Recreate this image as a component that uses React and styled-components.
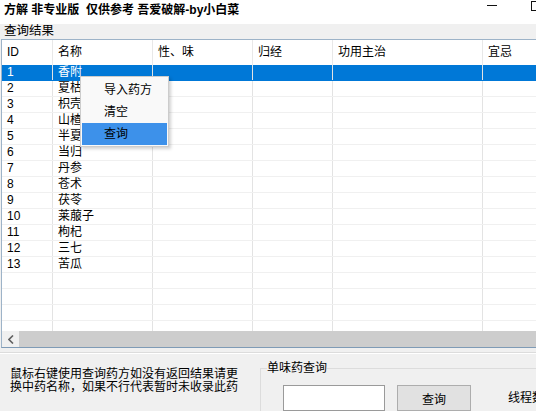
import React from "react";
import styled, { createGlobalStyle } from "styled-components";

const FONT = `"Liberation Sans", "Noto Sans CJK SC", sans-serif`;

const Global = createGlobalStyle`
  html, body { margin: 0; padding: 0; background: #f0f0f0; }
  body { font-family: ${FONT}; }
`;

const Window = styled.div`
  position: relative;
  width: 536px;
  height: 411px;
  overflow: hidden;
  background: #f0f0f0;
  display: flex;
  flex-direction: column;
  font-family: ${FONT};
  font-size: 12px;
  color: #000;
`;

const TitleBar = styled.div`
  height: 24px;
  flex: none;
  background: #fff;
  display: flex;
  align-items: flex-start;
`;

const TitleText = styled.div`
  padding: 3px 0 0 4px;
  font-weight: bold;
  font-size: 12px;
  line-height: 15px;
  white-space: pre;
`;

const Captions = styled.div`
  margin-left: auto;
  width: 49px;
  flex: none;
  display: flex;
  gap: 34px;
`;

const MinGlyph = styled.span`
  flex: none;
  width: 10px;
  height: 1px;
  margin-top: 5px;
  background: #111;
`;

const MaxGlyph = styled.span`
  flex: none;
  width: 10px;
  height: 10px;
  margin-top: 1px;
  border: 1px solid #111;
  box-sizing: border-box;
`;

const GroupLabel = styled.div`
  height: 15px;
  flex: none;
  padding-left: 4px;
  font-size: 12.5px;
  line-height: 15px;
`;

const ListBox = styled.div`
  height: 309px;
  width: 540px;
  margin-left: 1px;
  flex: none;
  box-sizing: border-box;
  border: 1px solid #9db3c8;
  border-bottom-color: #7f9bb6;
  background: #fff;
  display: flex;
  flex-direction: column;
`;

const GridArea = styled.div`
  flex: 1;
  overflow: hidden;
  display: flex;
  flex-direction: column;
`;

const COLS = "51px 100px 100px 80px 150px 1fr";

const HeaderRow = styled.div`
  display: grid;
  grid-template-columns: ${COLS};
  height: 25px;
  flex: none;
  line-height: 25px;
`;

const Row = styled.div`
  display: grid;
  grid-template-columns: ${COLS};
  height: 16px;
  flex: none;
  box-sizing: border-box;
  line-height: 15px;
  border-bottom: 1px solid ${(p) => (p.$selected ? "#0078d7" : "#f0f0f0")};
  background: ${(p) => (p.$selected ? "#0078d7" : "#fff")};
  color: ${(p) => (p.$selected ? "#fff" : "#000")};
`;

const Cell = styled.div`
  box-sizing: border-box;
  padding-left: 5px;
  border-right: 1px solid ${(p) => (p.$head ? "#e8e8e8" : "#e3e3e3")};
  white-space: nowrap;
  overflow: hidden;
`;

const HScroll = styled.div`
  height: 16px;
  flex: none;
  display: flex;
  background: #f0f0f0;
`;

const ScrollArrow = styled.div`
  width: 17px;
  flex: none;
  display: flex;
  align-items: center;
  justify-content: center;
`;

const ScrollThumb = styled.div`
  flex: 1;
  background: #cdcdcd;
`;

const BottomPanel = styled.div`
  flex: 1;
  margin-top: 4px;
  border-top: 1px solid #dcdcdc;
  box-shadow: inset 0 1px 0 #fff;
  display: flex;
  align-items: flex-start;
`;

const Hint = styled.div`
  width: 260px;
  flex: none;
  box-sizing: border-box;
  padding: 15px 0 0 10px;
  font-size: 12px;
  line-height: 13px;
`;

const Group = styled.fieldset`
  margin: 8px 0 0 0;
  padding: 0 0 0 6px;
  border: 1px solid #dcdcdc;
  width: 320px;
  min-width: 0;
  flex: none;
  height: 80px;
`;

const Legend = styled.legend`
  padding: 0;
  font-size: 12px;
  line-height: 14px;
`;

const FieldRow = styled.div`
  display: flex;
  align-items: center;
  margin-top: 10px;
  padding-left: 16px;
`;

const TextInput = styled.input`
  width: 102px;
  height: 26px;
  box-sizing: border-box;
  border: 1px solid #9a9a9a;
  background: #fff;
  margin: 0;
  padding: 0 3px;
  font-family: ${FONT};
  font-size: 12px;
  outline: none;
`;

const Button = styled.button`
  margin: 0 0 0 12px;
  width: 74px;
  height: 26px;
  box-sizing: border-box;
  border: 1px solid #adadad;
  background: #e1e1e1;
  font-family: ${FONT};
  font-size: 12px;
  color: #000;
  padding: 0;
`;

const FieldLabel = styled.span`
  margin-left: 37px;
  white-space: nowrap;
  line-height: 26px;
`;

const Menu = styled.div`
  position: absolute;
  left: 80px;
  top: 76px;
  width: 89px;
  box-sizing: border-box;
  padding: 2px 1px 1px;
  border: 1px solid #cccccc;
  background: #f9f9f9;
  box-shadow: 2px 2px 3px rgba(0, 0, 0, 0.18);
`;

const MenuItem = styled.div`
  height: 22px;
  line-height: 22px;
  padding-left: 22px;
  background: ${(p) => (p.$active ? "#3d91ea" : "transparent")};
`;

const COLUMNS = ["ID", "名称", "性、味", "归经", "功用主治", "宜忌"];
const HERBS = [
  "香附", "夏枯草", "枳壳", "山楂", "半夏", "当归", "丹参", "苍术",
  "茯苓", "莱菔子", "枸杞", "三七", "苦瓜",
];

export default function App() {
  const rows = [];
  for (let i = 0; i < 17; i++) {
    const name = HERBS[i];
    rows.push(
      <Row key={i} $selected={i === 0}>
        <Cell>{name ? i + 1 : ""}</Cell>
        <Cell>{name || ""}</Cell>
        <Cell />
        <Cell />
        <Cell />
        <Cell />
      </Row>
    );
  }
  return (
    <Window>
      <Global />
      <TitleBar>
        <TitleText>{"方解 非专业版  仅供参考 吾爱破解-by小白菜"}</TitleText>
        <Captions>
          <MinGlyph />
          <MaxGlyph />
        </Captions>
      </TitleBar>
      <GroupLabel>查询结果</GroupLabel>
      <ListBox>
        <GridArea>
          <HeaderRow>
            {COLUMNS.map((c) => (
              <Cell key={c} $head>
                {c}
              </Cell>
            ))}
          </HeaderRow>
          {rows}
        </GridArea>
        <HScroll>
          <ScrollArrow>
            <svg width="6" height="9" viewBox="0 0 6 9">
              <path d="M5 0.5 L1 4.5 L5 8.5" fill="none" stroke="#606060" strokeWidth="1.6" />
            </svg>
          </ScrollArrow>
          <ScrollThumb />
        </HScroll>
      </ListBox>
      <BottomPanel>
        <Hint>
          鼠标右键使用查询药方如没有返回结果请更
          <br />
          换中药名称，如果不行代表暂时未收录此药
        </Hint>
        <Group>
          <Legend>单味药查询</Legend>
          <FieldRow>
            <TextInput />
            <Button>查询</Button>
            <FieldLabel>线程数</FieldLabel>
          </FieldRow>
        </Group>
      </BottomPanel>
      <Menu>
        <MenuItem>导入药方</MenuItem>
        <MenuItem>清空</MenuItem>
        <MenuItem $active>查询</MenuItem>
      </Menu>
    </Window>
  );
}
